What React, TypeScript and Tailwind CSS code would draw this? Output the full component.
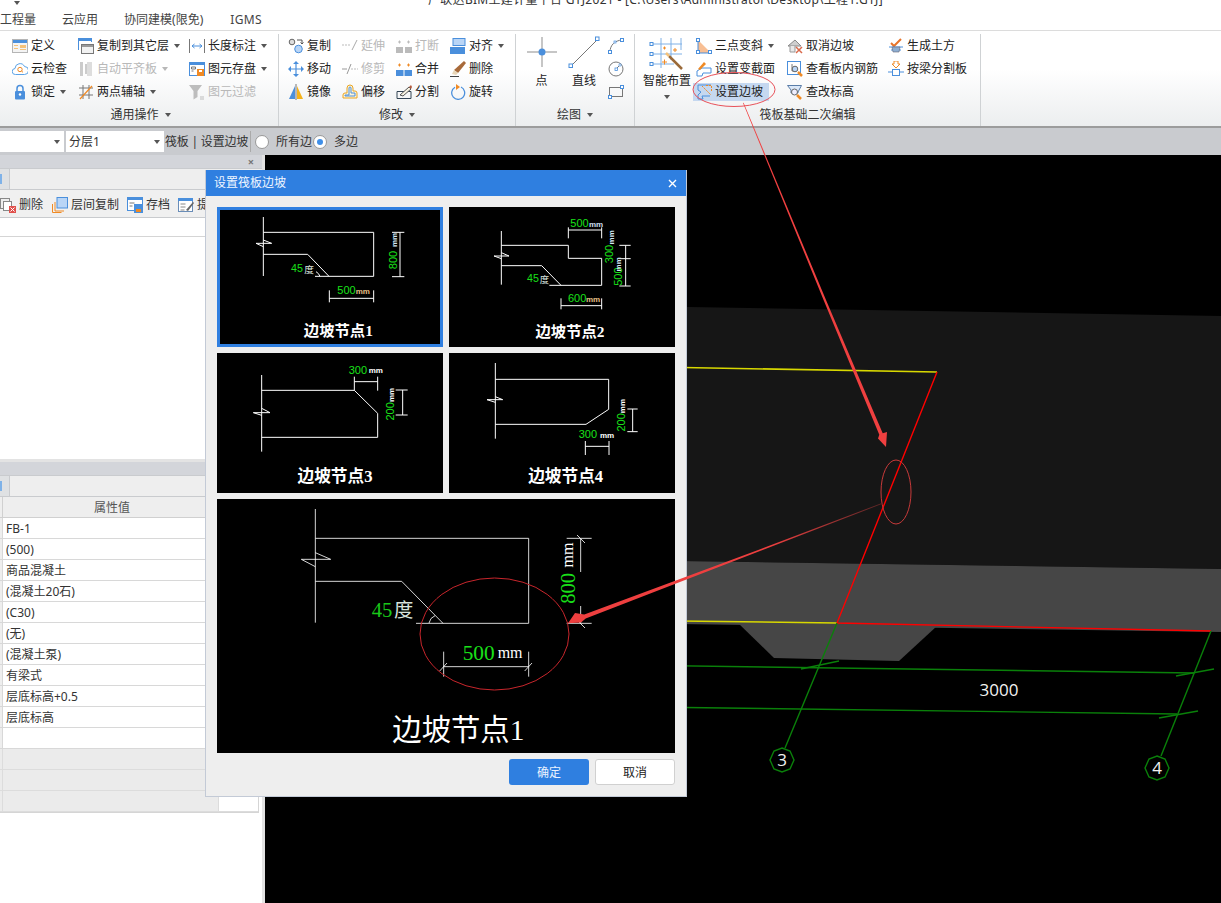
import type { ReactNode } from "react";

const B = "#4a8fdc";
const L = "#b9d5f6";
const O = "#f08a24";

const I = ({ children }: { children: ReactNode }) => (
  <svg width="16" height="16" viewBox="0 0 16 16" fill="none" strokeWidth="1" className="shrink-0">
    {children}
  </svg>
);

const icons: Record<string, ReactNode> = {
  define: (
    <I>
      <rect x="0.5" y="1.5" width="15" height="13" fill="#f4f4f4" stroke="#b5b5b5" />
      <rect x="1" y="2" width="14" height="3" fill={B} />
      <path d="M2 7h4v1H2zM8 7h6v3H8zM2 10h4v1H2zM8 11h6v1H8z" fill="#f5c27a" />
    </I>
  ),
  cloud: (
    <I>
      <path d="M3.500 13.500a3 3 0 0 1-.5-6A5 5 0 0 1 12.500 5.500a4 4 0 0 1 0 8z" fill="#fff" stroke="#5aa2e6" />
      <circle cx="8" cy="8.500" r="2.200" stroke={O} />
      <path d="M9.600 10l1.400 1.400" stroke={O} />
    </I>
  ),
  lock: (
    <I>
      <path d="M5 7V4.500a3 3 0 0 1 6 0V7" stroke={B} strokeWidth="1.500" />
      <rect x="3" y="7" width="10" height="8.500" rx="1" fill={B} />
      <circle cx="8" cy="10.500" r="1.200" fill="#fff" />
    </I>
  ),
  copyLayer: (
    <I>
      <path d="M0.500 12V1h13v3" stroke={B} />
      <rect x="0" y="0" width="14" height="3" fill={B} />
      <rect x="3.500" y="6.500" width="12" height="9" fill="#f2f2f2" stroke="#777" />
      <rect x="4" y="7" width="11" height="2" fill="#999" />
    </I>
  ),
  align: (
    <I>
      <path d="M2 1h3v14H2zM7 3h2v10H7z" fill="#ccc" />
      <rect x="9" y="1" width="5" height="14" fill="#ddd" />
    </I>
  ),
  axis: (
    <I>
      <path d="M1 4h14M1 11h14M5 1v14M11 1v14" stroke="#777" />
      <path d="M2 15 14 2" stroke={O} strokeWidth="1.200" />
    </I>
  ),
  length: (
    <I>
      <path d="M0.500 1v14M15.500 1v14" stroke="#777" />
      <path d="M3 8h10M3 8l2.500-2M3 8l2.500 2M13 8l-2.500-2M13 8l-2.500 2" stroke={B} />
    </I>
  ),
  store: (
    <I>
      <rect x="0.500" y="1.500" width="15" height="13" fill="#fff" stroke={B} />
      <rect x="0" y="1" width="16" height="3" fill={B} />
      <path d="M2.500 6h4v2h-4zM2.500 10h2" stroke="#777" />
      <rect x="8" y="8" width="7" height="7" fill={O} />
      <rect x="10" y="9" width="3" height="2" fill="#fff" />
    </I>
  ),
  filter: (
    <I>
      <path d="M0 1h13L8.500 7v6l-4 2.500V7z" fill="#bdbdbd" />
      <path d="M11 13h4M11 15h4" stroke="#bdbdbd" />
    </I>
  ),
  copy: (
    <I>
      <circle cx="4" cy="4" r="2.800" fill="#ddd" stroke="#666" />
      <circle cx="10.500" cy="11" r="3.800" fill={L} stroke={B} />
      <path d="M9 2h5v4M12.500 4.500 14 6l1.500-1.500" stroke="#555" />
    </I>
  ),
  extend: (
    <I>
      <path d="M0 7h9" stroke="#bbb" strokeDasharray="2 1" />
      <path d="M10 12 15 2" stroke="#aaa" />
    </I>
  ),
  breakLine: (
    <I>
      <rect x="0" y="9" width="7" height="6" fill="#bbb" />
      <rect x="9" y="9" width="7" height="6" fill="#bbb" />
      <path d="M2 4h3M3.500 2.500v3M11 4h3M12.500 2.500v3" stroke="#bbb" />
    </I>
  ),
  alignObj: (
    <I>
      <rect x="3" y="0.500" width="12" height="7" fill={L} stroke={B} />
      <rect x="0" y="9" width="15" height="7" fill={B} />
    </I>
  ),
  move: (
    <I>
      <path d="M8 1v14M1 8h14" stroke={B} strokeWidth="1.200" />
      <path d="M8 0l3 3H5zM8 16l3-3H5zM0 8l3-3v6zM16 8l-3-3v6z" fill={B} />
    </I>
  ),
  trim: (
    <I>
      <path d="M0 8h5" stroke="#999" />
      <path d="M5 13 9 3" stroke="#999" />
      <path d="M9 8h7" stroke="#bbb" strokeDasharray="2 1" />
    </I>
  ),
  merge: (
    <I>
      <rect x="0" y="9" width="7.500" height="6" fill={B} />
      <rect x="8.500" y="9" width="7.500" height="6" fill={B} />
      <path d="M2 4h3M3.500 2.500v3M11 4h3M12.500 2.500v3" stroke={O} />
    </I>
  ),
  erase: (
    <I>
      <path d="M14 0l2 2-8 10-4-3z" fill="#a86a3a" />
      <path d="M4 9l4 3-2 2-4-1z" fill="#e8d6b8" />
      <path d="M0 15.500h9" stroke="#444" />
    </I>
  ),
  mirror: (
    <I>
      <path d="M7 2v13H1z" fill={B} />
      <path d="M9 2v13h6z" fill="#f5b21a" />
      <path d="M8 0v16" stroke="#777" />
    </I>
  ),
  offset: (
    <I>
      <path d="M1 14v-3a2 2 0 0 1 2-2h2V4a3 3 0 0 1 6 0v3h2a2 2 0 0 1 2 2v5z" fill="#fff5d8" stroke="#e9a524" />
      <path d="M3 12V11h4V4a1 1 0 0 1 2 0v5h4v3z" stroke={B} />
    </I>
  ),
  split: (
    <I>
      <path d="M1 7.500h14v7H1z" stroke="#345" />
      <path d="M4 11 13 3l2 2-8 7z" fill="#f7f2e2" stroke="#555" />
      <path d="M13 3l2 2 1-2-1-2z" fill="#b45a3c" />
    </I>
  ),
  rotate: (
    <I>
      <path d="M11 3a6.500 6.500 0 1 1-6 .2" stroke={B} strokeWidth="1.300" />
      <path d="M6 0v6l4-3z" fill={O} />
    </I>
  ),
  arc: (
    <I>
      <path d="M2 14C2 7 7 2.500 14 2" stroke="#777" />
      <rect x="0.500" y="12.500" width="3" height="3" fill="#fff" stroke={B} />
      <rect x="12.500" y="0.500" width="3" height="3" fill="#fff" stroke={B} />
      <rect x="6" y="3" width="2" height="2" fill="#fff" stroke={B} strokeWidth="0.700" />
    </I>
  ),
  circle: (
    <I>
      <circle cx="8" cy="8" r="7" stroke="#777" />
      <path d="M8 8l4-4" stroke="#777" />
      <rect x="7" y="7" width="2.400" height="2.400" fill="#fff" stroke={B} strokeWidth="0.800" />
      <rect x="11" y="3" width="2" height="2" fill="#fff" stroke={B} strokeWidth="0.600" />
    </I>
  ),
  rect: (
    <I>
      <rect x="1.500" y="3.500" width="13" height="9" stroke="#777" />
      <rect x="0.500" y="11.500" width="3" height="3" fill="#fff" stroke={B} />
      <rect x="12.500" y="1.500" width="3" height="3" fill="#fff" stroke={B} />
    </I>
  ),
  threePoint: (
    <I>
      <path d="M2 2v13h13z" fill="#f8bf94" />
      <path d="M2 2v13h13" stroke={B} />
      <rect x="0.500" y="0.500" width="3" height="3" fill="#fff" stroke={B} />
      <rect x="0.500" y="12.500" width="3" height="3" fill="#fff" stroke={B} />
      <rect x="12.500" y="12.500" width="3" height="3" fill="#fff" stroke={B} />
    </I>
  ),
  variable: (
    <I>
      <path d="M1 15v-5l5-3h9v5H7l-1 3z" fill="#fff" stroke={B} />
      <path d="M2 8 8 1l2 2-6 6z" fill={O} />
    </I>
  ),
  slope: (
    <I>
      <path d="M2 1h13M2 1v5l3 2-3 3v4h5l-1-3h8" stroke={B} />
      <path d="M6 2l9 9M10 1.500h5.500V7" stroke={O} strokeDasharray="2 1" />
    </I>
  ),
  cancel: (
    <I>
      <path d="M1 8 8 2l6 6H1z" fill="#cfcfcf" stroke="#888" />
      <path d="M3 8v6h5V8" fill="#e8e8e8" stroke="#999" />
      <path d="M9 9l6 6M15 9l-6 6" stroke="#d9694a" strokeWidth="1.500" />
    </I>
  ),
  rebar: (
    <I>
      <rect x="0.500" y="0.500" width="13" height="13" fill="#fff" stroke={B} />
      <path d="M5 3v7h4" stroke="#777" />
      <circle cx="8" cy="8" r="2.800" fill={L} stroke="#666" />
      <path d="M11 11l4 4" stroke={O} strokeWidth="2.500" />
    </I>
  ),
  level: (
    <I>
      <path d="M0.500 1.500h14L11 8v1H4V6z" fill="#dbe8f8" stroke="#5a7da8" />
      <circle cx="7.500" cy="8" r="3" fill="#eef" stroke="#666" />
      <path d="M10 11l4 4" stroke={O} strokeWidth="2.500" />
    </I>
  ),
  earth: (
    <I>
      <path d="M3 5l3 3 7-7" stroke="#e8742a" strokeWidth="2" />
      <path d="M1 9h14M3 12h10" stroke={B} />
      <path d="M4 9h8l-1 5H5z" fill="#8eaed2" stroke="#667" strokeWidth="0.600" />
    </I>
  ),
  beamSplit: (
    <I>
      <path d="M6 0h4v3h2L8 7 4 3h2z" fill="#fff" stroke={O} />
      <rect x="4.500" y="8.500" width="7" height="6" stroke={B} />
      <path d="M0 11h4M12 11h4" stroke={B} />
    </I>
  ),
  del: (
    <I>
      <rect x="0.500" y="1.500" width="9" height="10" fill="#eee" stroke="#888" />
      <rect x="3.500" y="4.500" width="8" height="9" fill="#fff" stroke="#888" />
      <rect x="9" y="9" width="7" height="7" fill="#e0504c" />
      <path d="M10.500 10.500l4 4M14.500 10.500l-4 4" stroke="#fff" />
    </I>
  ),
  floorCopy: (
    <I>
      <rect x="5" y="0.500" width="10.500" height="10.500" fill={L} stroke={B} />
      <path d="M3 5v9h9M0.500 7v8.500h9" stroke={O} />
    </I>
  ),
  archive: (
    <I>
      <rect x="0.500" y="0.500" width="15" height="13" fill="#fff" stroke={B} />
      <rect x="0" y="0" width="16" height="3" fill={B} />
      <path d="M2.500 6h5M2.500 9h3" stroke="#777" />
      <rect x="7" y="7" width="9" height="9" fill={B} />
      <rect x="9" y="12" width="5" height="3" fill={O} />
    </I>
  ),
  extract: (
    <I>
      <rect x="0.500" y="1.500" width="14" height="13" fill="#fff" stroke="#6a8db8" />
      <rect x="0" y="1" width="15" height="3" fill={B} />
      <path d="M2.500 7h5M2.500 10h5M2.500 13h4" stroke="#888" />
      <path d="M8 13 15 5l1 1-6 8z" fill="#666" />
    </I>
  ),
};

function Caret({ className }: { className: string }) {
  return <span className={`inline-block h-0 w-0 border-x-[3.5px] border-t-[4px] border-x-transparent ${className}`} />;
}

function Tool({ icon, label, arrow, off, active }: { icon: string; label?: string; arrow?: boolean; off?: boolean; active?: boolean }) {
  return (
    <div className="flex h-[23px] items-center">
      <div className={active ? "-ml-[3px] flex h-[18px] w-[76px] items-center bg-[#c5d8f0] pl-[3px]" : "flex h-[18px] items-center"}>
        {icons[icon]}
        {label && <span className={off ? "ml-[3px] whitespace-nowrap text-[#b8b8b8]" : "ml-[3px] whitespace-nowrap text-[#222]"}>{label}</span>}
        {arrow && <Caret className={off ? "ml-[5px] border-t-[#b8b8b8]" : "ml-[5px] border-t-[#555]"} />}
      </div>
    </div>
  );
}

function Group({ label, width, caret = true, children }: { label: string; width: string; caret?: boolean; children: ReactNode }) {
  return (
    <div className={`flex h-[92px] flex-col border-r border-[#cfd2d4] ${width}`}>
      <div className="flex h-[69px] shrink-0">{children}</div>
      <div className="flex flex-1 items-center justify-center gap-[6px] pt-px text-[#333]">
        <span>{label}</span>
        {caret && <Caret className="border-t-[#555]" />}
      </div>
    </div>
  );
}

const serif = "font-['Liberation_Serif','Noto_Sans_CJK_SC',serif]";
const sans = "font-['Liberation_Sans',sans-serif]";
const cjk = "font-['Noto_Sans_CJK_SC',sans-serif]";

function Tile({ box, selected, children }: { box: string; selected?: boolean; children: ReactNode }) {
  return (
    <div className="relative h-[140px] bg-black">
      <svg viewBox={box} className="block h-full w-full" fill="none" stroke="#fff" strokeWidth="3">
        {children}
      </svg>
      {selected && <div className="absolute inset-0 border-[3px] border-[#2f7fe0]" />}
    </div>
  );
}

const T = ({ x, y, s, fill = "#19e019", rot, bold, a, children, cls }: { x: number; y: number; s: number; fill?: string; rot?: boolean; bold?: boolean; a?: "middle"; cls?: string; children: ReactNode }) => (
  <text
    x={x}
    y={y}
    fontSize={s}
    fill={fill}
    stroke="none"
    fontWeight={bold ? 700 : 400}
    textAnchor={a}
    transform={rot ? `rotate(-90 ${x} ${y})` : undefined}
    className={cls ?? sans}
  >
    {children}
  </text>
);

const rows = ["FB-1", "(500)", "商品混凝土", "(混凝土20石)", "(C30)", "(无)", "(混凝土泵)", "有梁式", "层底标高+0.5", "层底标高", ""];

function PanelHeader({ close }: { close?: boolean }) {
  return (
    <>
      <div className="flex h-[13px] items-center justify-end bg-[#d3d5da] pr-[8px]">
        {close && <span className="text-[11px] leading-none font-bold text-[#777]">×</span>}
      </div>
      <div className="flex h-[22px] border-y border-[#c9cbce] bg-[#eeeeee]">
        <div className="flex w-[10px] items-center border-r border-[#c9cbce] bg-[#dfe1e3]">
          <div className="h-[10px] w-[2px] bg-[#7fb2e8]" />
        </div>
      </div>
    </>
  );
}

function PanelTool({ icon, label, ml }: { icon: string; label: string; ml: string }) {
  return (
    <div className={`flex items-center gap-[3px] ${ml}`}>
      {icons[icon]}
      <span className="whitespace-nowrap">{label}</span>
    </div>
  );
}

export default function App() {
  return (
    <div className="relative flex h-[903px] w-full flex-col overflow-hidden bg-white font-['Noto_Sans','Noto_Sans_CJK_SC',sans-serif] text-[12px] leading-[18px] text-[#222]">
      {/* 标题栏 */}
      <div className="relative h-[10px] overflow-hidden">
        <span className="absolute top-[1px] left-[14px] h-0 w-0 border-x-[3.5px] border-t-[4px] border-x-transparent border-t-[#555]" />
        <div className="absolute -top-[9px] left-[428px] whitespace-nowrap text-[12px] tracking-[0.3px] text-[#333]">
          广联达BIM土建计量平台 GTJ2021 - [C:\Users\Administrator\Desktop\工程1.GTJ]
        </div>
      </div>

      {/* 菜单 */}
      <div className="flex h-[20px] items-center text-[#444]">
        <span>工程量</span>
        <span className="ml-[26px]">云应用</span>
        <span className="ml-[26px]">协同建模(限免)</span>
        <span className="ml-[27px] tracking-[0.4px]">IGMS</span>
      </div>

      {/* Ribbon */}
      <div className="flex h-[98px] border-t border-b-2 border-t-[#dcdcdc] border-b-[#9c9c9c] bg-gradient-to-b from-white from-40% to-[#eceeef] pt-[3px] pl-[3px]">
        <Group label="通用操作" width="w-[276px]">
          <div className="w-[75px] pl-[9px]">
            <Tool icon="define" label="定义" />
            <Tool icon="cloud" label="云检查" />
            <Tool icon="lock" label="锁定" arrow />
          </div>
          <div className="w-[111px]">
            <Tool icon="copyLayer" label="复制到其它层" arrow />
            <Tool icon="align" label="自动平齐板" arrow off />
            <Tool icon="axis" label="两点辅轴" arrow />
          </div>
          <div>
            <Tool icon="length" label="长度标注" arrow />
            <Tool icon="store" label="图元存盘" arrow />
            <Tool icon="filter" label="图元过滤" off />
          </div>
        </Group>
        <Group label="修改" width="w-[237px]">
          <div className="w-[63px] pl-[9px]">
            <Tool icon="copy" label="复制" />
            <Tool icon="move" label="移动" />
            <Tool icon="mirror" label="镜像" />
          </div>
          <div className="w-[54px]">
            <Tool icon="extend" label="延伸" off />
            <Tool icon="trim" label="修剪" off />
            <Tool icon="offset" label="偏移" />
          </div>
          <div className="w-[54px]">
            <Tool icon="breakLine" label="打断" off />
            <Tool icon="merge" label="合并" />
            <Tool icon="split" label="分割" />
          </div>
          <div>
            <Tool icon="alignObj" label="对齐" arrow />
            <Tool icon="erase" label="删除" />
            <Tool icon="rotate" label="旋转" />
          </div>
        </Group>
        <Group label="绘图" width="w-[119px]">
          <div className="flex w-[48px] flex-col items-center pl-[3px]">
            <svg width="34" height="38" viewBox="0 0 34 38" fill="none">
              <path d="M17 3v30M2 18h30" stroke="#8d8d8d" />
              <circle cx="17" cy="18" r="3.500" fill="#4a8fdc" />
            </svg>
            <span>点</span>
          </div>
          <div className="flex w-[40px] flex-col items-center">
            <svg width="34" height="38" viewBox="0 0 34 38" fill="none">
              <path d="M4 32 30 6" stroke="#777" />
              <rect x="2" y="30" width="3.500" height="3.500" fill="#fff" stroke="#4a8fdc" />
              <rect x="28.500" y="3" width="3.500" height="3.500" fill="#fff" stroke="#4a8fdc" />
            </svg>
            <span>直线</span>
          </div>
          <div className="ml-[4px]">
            <Tool icon="arc" />
            <Tool icon="circle" />
            <Tool icon="rect" />
          </div>
        </Group>
        <Group label="筏板基础二次编辑" width="w-[346px]" caret={false}>
          <div className="flex w-[61px] flex-col items-center pl-[3px]">
            <svg width="36" height="38" viewBox="0 0 36 38" fill="none">
              <path d="M3 10h30M3 20h30M3 30h22M12 4v30M22 4v22M32 4v12" stroke="#7fb0e6" />
              <rect x="1" y="8.500" width="3" height="3" fill="#fff" stroke="#4a8fdc" />
              <rect x="1" y="18.500" width="3" height="3" fill="#fff" stroke="#4a8fdc" />
              <rect x="1" y="28.500" width="3" height="3" fill="#fff" stroke="#4a8fdc" />
              <path d="M20 22 33 35" stroke="#9a6a3a" strokeWidth="2.500" />
              <path d="M17 19l3 3" stroke="#f5c27a" strokeWidth="2.500" />
              <path d="M13 28h5M15.500 25.500v5M24 16h4M26 14v4M14 14h3M15.500 12.500v3" stroke="#f08a24" />
            </svg>
            <span className="whitespace-nowrap">智能布置</span>
            <Caret className="mt-[5px] border-t-[#555]" />
          </div>
          <div className="w-[91px]">
            <Tool icon="threePoint" label="三点变斜" arrow />
            <Tool icon="variable" label="设置变截面" />
            <Tool icon="slope" label="设置边坡" active />
          </div>
          <div className="w-[101px]">
            <Tool icon="cancel" label="取消边坡" />
            <Tool icon="rebar" label="查看板内钢筋" />
            <Tool icon="level" label="查改标高" />
          </div>
          <div>
            <Tool icon="earth" label="生成土方" />
            <Tool icon="beamSplit" label="按梁分割板" />
          </div>
        </Group>
      </div>

      {/* 属性条 */}
      <div className="flex h-[27px] items-center bg-[#c9cbcf] text-[#333]">
        <div className="flex h-[21px] w-[64px] items-center justify-end bg-white pr-[4px]">
          <Caret className="border-t-[#555]" />
        </div>
        <div className="ml-[2px] flex h-[21px] w-[98px] items-center justify-between bg-white pr-[4px] pl-[3px]">
          <span className="pt-px">分层1</span>
          <Caret className="border-t-[#555]" />
        </div>
        <span className="ml-[1px] whitespace-nowrap pt-px tracking-[-0.2px]">筏板 | 设置边坡</span>
        <div className="ml-[2px] h-[21px] w-px bg-[#aaa]" />
        <div className="ml-[4px] h-[14px] w-[14px] rounded-full border border-[#999] bg-white" />
        <span className="ml-[7px] whitespace-nowrap pt-px">所有边</span>
        <div className="ml-px flex h-[14px] w-[14px] items-center justify-center rounded-full border border-[#999] bg-white">
          <div className="h-[6px] w-[6px] rounded-full bg-[#3f8fe8]" />
        </div>
        <span className="ml-[7px] pt-px">多边</span>
      </div>

      <div className="flex min-h-0 flex-1">
        {/* 左侧面板 */}
        <aside className="flex w-[265px] shrink-0 flex-col border-r-[3px] border-[#e3e3e3] bg-white">
          <PanelHeader close />
          <div className="flex h-[28px] items-center border-b border-[#c9cbce] bg-[#f0f0f0] pt-[2px] text-[#333]">
            <PanelTool icon="del" label="删除" ml="ml-0" />
            <PanelTool icon="floorCopy" label="层间复制" ml="ml-[9px]" />
            <PanelTool icon="archive" label="存档" ml="ml-[8px]" />
            <PanelTool icon="extract" label="提取" ml="ml-[8px]" />
          </div>
          <div className="h-[19px] border-b border-[#d5d5d5]" />
          <div className="h-[222px]" />
          <div className="h-[3px] bg-[#e3e3e3]" />
          <PanelHeader />
          <div className="w-[259px] border-r border-b border-[#d5d5d5]">
            <div className="flex h-[21px] items-center border-b border-[#d0d0d0] bg-[#eeeeee] text-[#555]">
              <div className="h-full w-[3px] border-r border-[#d0d0d0]" />
              <div className="flex-1 pt-[2px] pr-[37px] text-center">属性值</div>
            </div>
            {rows.map((r, i) => (
              <div key={i} className="flex h-[21px] items-center border-b border-[#d8d8d8]">
                <div className="h-full w-[3px] border-r border-[#d8d8d8] bg-[#eeeeee]" />
                <div className="flex-1 pt-[2px] pl-[3px] text-[#333]">{r}</div>
              </div>
            ))}
            {[0, 1, 2].map((i) => (
              <div key={i} className="flex h-[21px] border-b border-[#dcdcdc] bg-[#ebebeb]">
                <div className="w-[3px] border-r border-[#dcdcdc]" />
                <div className="w-[216px] border-r border-[#dcdcdc]" />
                <div className="flex-1 bg-white" />
              </div>
            ))}
          </div>
        </aside>

        {/* 绘图区 */}
        <div className="relative flex-1 bg-black">
          <svg viewBox="265 155 956 748" className="block h-full w-full" fill="none">
            <polygon points="265,300 1221,316 1221,569 265,555" fill="#161616" />
            <polygon points="265,555 1221,569 1221,632 265,618" fill="#464646" />
            <polygon points="737,622 937,626 899,661 774,658" fill="#464646" />
            <path d="M265 360 937 372" stroke="#d8d800" strokeWidth="1.500" />
            <path d="M265 616 837 623" stroke="#d8d800" strokeWidth="1.500" />
            <path d="M937 372 837 623 1211 631" stroke="#ff0000" strokeWidth="1.400" />
            <g stroke="#0a800a" strokeWidth="1.400">
              <path d="M837 623 785 748" />
              <path d="M1211 631 1161 756" />
              <path d="M265 660 1194 673" />
              <path d="M265 702 1177 714" />
              <path d="M801 669 839 661" />
              <path d="M1176 676 1214 669" />
              <path d="M1159 718 1198 711" />
              <polygon points="782,748 790,751 794,760 790,769 782,772 774,769 770,760 774,751" />
              <polygon points="1157,756 1165,759 1169,768 1165,777 1157,780 1149,777 1145,768 1149,759" />
            </g>
            <g fill="#f2f2f2" stroke="none" className="font-['Open_Sans',sans-serif]">
              <text x="999" y="696" fontSize="17" textAnchor="middle">3000</text>
              <text x="782" y="766" fontSize="17" textAnchor="middle">3</text>
              <text x="1157" y="774" fontSize="17" textAnchor="middle">4</text>
            </g>
          </svg>
        </div>
      </div>

      {/* 设置筏板边坡 */}
      <div className="absolute top-[170px] left-[205px] z-10 flex h-[627px] w-[482px] flex-col border-x border-b border-[#c3cad6] bg-[#eeeeee]">
        <div className="flex h-[26px] shrink-0 items-center justify-between bg-[#2f7fe0] pr-[9px] pl-[8px] text-[#f0f6ff]">
          <span>设置筏板边坡</span>
          <svg width="9" height="9" viewBox="0 0 9 9" stroke="#fff" strokeWidth="1.400">
            <path d="M1 1l7 7M8 1 1 8" />
          </svg>
        </div>
        <div className="grid grid-cols-2 gap-[6px] px-[11px] pt-[11px]">
          <Tile box="36 111 678 420" selected>
            <path d="M175 141V318M175 187H506V319H330M372 319 308 253H175M153 220H200M153 220l22 10M175 210l25 10" />
            <path d="M345 319a26 26 0 0 0-12-14" />
            <T x={258} y={305} s={32}>45</T>
            <T x={298} y={308} s={29} fill="#dfe8e0" cls={cjk}>度</T>
            <T x={397} y={372} s={33}>500</T>
            <T x={452} y={372} s={24} fill="#e6bf84" bold>mm</T>
            <path d="M373 385H506M373 361V397M506 361V397" />
            <path d="M585 187V320M561 187H598M561 320H598" />
            <T x={575} y={270} s={33} rot a="middle">800</T>
            <T x={575} y={210} s={24} fill="#d5e8f5" rot a="middle" bold>mm</T>
            <T x={400} y={497} s={46} fill="#fff" bold a="middle" cls={serif}>边坡节点1</T>
          </Tile>
          <Tile box="732 111 678 420">
            <path d="M889 183V344M889 226H1090V265H1190V346H1033M1068 346 1010 287H889M867 258H912M867 258l22 8M889 248l23 10" />
            <T x={966} y={335} s={32}>45</T>
            <T x={1004} y={338} s={28} fill="#dfe8e0" cls={cjk}>度</T>
            <T x={1096} y={170} s={33}>500</T>
            <T x={1152} y={170} s={24} fill="#c8dcf0" bold>mm</T>
            <path d="M1090 180H1190M1090 172V205M1190 172V205" />
            <path d="M1262 226V348M1243 226H1277M1243 266H1277M1243 348H1277" />
            <T x={1224} y={252} s={33} rot a="middle">300</T>
            <T x={1228} y={202} s={24} fill="#d5e8f5" rot a="middle" bold>mm</T>
            <T x={1250} y={320} s={33} rot a="middle">500</T>
            <T x={1248} y={283} s={24} fill="#d5e8f5" rot a="middle" bold>mm</T>
            <T x={1089} y={396} s={33}>600</T>
            <T x={1143} y={396} s={24} fill="#e6bf84" bold>mm</T>
            <path d="M1068 407H1190M1068 385V418M1190 385V418" />
            <T x={1095} y={500} s={46} fill="#fff" bold a="middle" cls={serif}>边坡节点2</T>
          </Tile>
          <Tile box="36 549 678 420">
            <path d="M170 615V845M170 661H448L518 730V802H170M145 728H195M145 728l25 8M170 715l25 13" />
            <T x={431} y={611} s={33}>300</T>
            <T x={491} y={609} s={24} fill="#fff" bold>mm</T>
            <path d="M448 635H518M448 620V662M518 620V662" />
            <path d="M593 660V735M572 660H608M572 735H608" />
            <T x={566} y={724} s={33} rot a="middle">200</T>
            <T x={566} y={675} s={24} fill="#fff" rot a="middle" bold>mm</T>
            <T x={390} y={935} s={50} fill="#fff" bold a="middle" cls={serif}>边坡节点3</T>
          </Tile>
          <Tile box="732 549 678 420">
            <path d="M871 579V806M871 628H1211V718L1143 763H871M846 689H893M846 689l25 8M871 680l22 9" />
            <path d="M1283 717V785M1267 717H1298M1267 785H1298" />
            <T x={1261} y={757} s={33} rot a="middle">200</T>
            <T x={1261} y={708} s={24} fill="#fff" rot a="middle" bold>mm</T>
            <T x={1121} y={803} s={33}>300</T>
            <T x={1185} y={803} s={24} fill="#fff" bold>mm</T>
            <path d="M1141 829H1212M1141 813V855M1212 813V855" />
            <T x={1082} y={935} s={50} fill="#fff" bold a="middle" cls={serif}>边坡节点4</T>
          </Tile>
        </div>
        <div className="mx-[11px] mt-[6px] h-[254px] shrink-0 bg-black">
          <svg viewBox="36 12 1374 762" className="block h-full w-full" fill="none" stroke="#fff" strokeWidth="2.500">
            <path d="M331 42V383M331 130H971V385H633M714 385 590 259H331M289 193H377M289 193l42 22M331 173l46 20" />
            <path d="M690 362a30 30 0 0 0-18 22" />
            <T x={500} y={365} s={62} fill="#19c819" cls={serif}>45</T>
            <T x={567} y={365} s={58} fill="#d8e4dc" cls={serif}>度</T>
            <T x={773} y={495} s={64} fill="#19e019" cls={serif}>500</T>
            <T x={878} y={488} s={48} fill="#fff" cls={serif}>mm</T>
            <path d="M716 515H971M716 470V545M971 470V545M704 528l22-24M959 528l22-24" />
            <path d="M1127 130V231M1127 333V385M1085 130H1160M1085 385H1160M1116 120l24 24M1116 375l24 24" />
            <T x={1110} y={280} s={62} fill="#19e019" rot a="middle" cls={serif}>800</T>
            <T x={1105} y={180} s={48} fill="#fff" rot a="middle" cls={serif}>mm</T>
            <T x={760} y={735} s={88} fill="#fff" a="middle" cls={serif}>边坡节点1</T>
          </svg>
        </div>
        <div className="flex justify-end gap-[6px] pt-[6px] pr-[11px]">
          <button className="h-[26px] w-[80px] rounded-[3px] bg-[#2f7fe0] pt-px text-[#eaf3ff]">确定</button>
          <button className="h-[26px] w-[80px] rounded-[3px] border border-[#d0d0d0] bg-white pt-px text-[#222]">取消</button>
        </div>
      </div>

      {/* 批注 */}
      <svg viewBox="0 0 1221 903" className="pointer-events-none absolute inset-0 z-20 h-[903px] w-[1221px]" fill="none">
        <defs>
          <linearGradient id="fade" gradientUnits="userSpaceOnUse" x1="882" y1="503" x2="770" y2="546">
            <stop offset="0" stopColor="#5c2626" />
            <stop offset="1" stopColor="#ee3f3f" />
          </linearGradient>
        </defs>
        <ellipse cx="734" cy="89.500" rx="41" ry="17" stroke="#e8525a" strokeWidth="1" />
        <ellipse cx="896" cy="492" rx="15" ry="32" stroke="#c83a3a" strokeWidth="1" />
        <ellipse cx="494.500" cy="634" rx="74.500" ry="56" stroke="#c8262c" strokeWidth="1" />
        <polygon points="743,103 743.600,102.800 826,300 882.700,433.300 887,432 886,447 878,438.500 879.300,434.700 824,301" fill="#f04040" />
        <polygon points="882,503 882.300,503.800 760,551 585.700,618.400 581,622.500 568,623.300 575,613 584.300,614.600 759.500,549.500" fill="url(#fade)" />
      </svg>
    </div>
  );
}
